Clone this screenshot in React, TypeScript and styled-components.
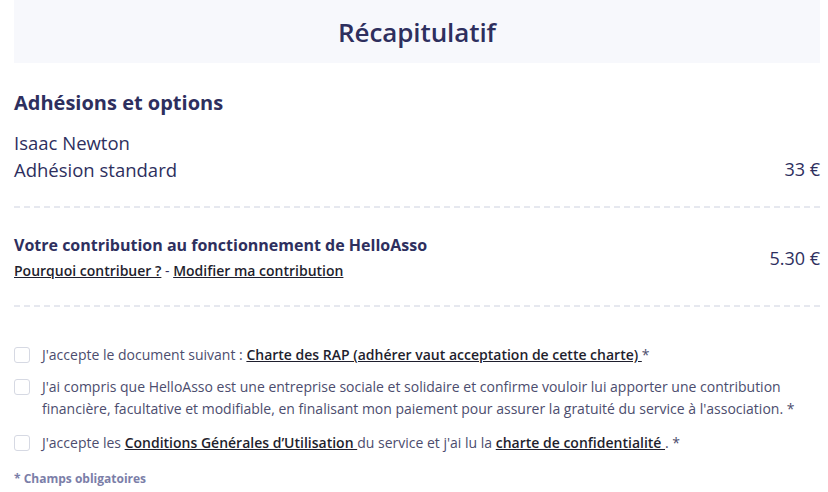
import React from "react";
import styled, { createGlobalStyle } from "styled-components";

const Global = createGlobalStyle`
  html, body { margin: 0; padding: 0; background: #fff; }
  body { font-family: "Open Sans", "Noto Sans", sans-serif; color: #2e2f5e; }
  * { box-sizing: border-box; }
`;

const Page = styled.div`
  padding: 0 8px 0 14px;
  width: 828px;
`;

const TitleBand = styled.div`
  background: #f7f8fc;
  height: 63px;
  display: flex;
  align-items: center;
  justify-content: center;
`;

const Title = styled.h1`
  margin: 0;
  font-size: 26px;
  font-weight: 600;
  color: #2e2f5e;
  letter-spacing: -0.1px;
`;

const SectionTitle = styled.h2`
  margin: 27px 0 0;
  font-size: 20px;
  font-weight: 700;
  line-height: 26px;
  color: #2e2f5e;
`;

const Row = styled.div`
  display: flex;
  justify-content: space-between;
  align-items: flex-end;
`;

const ItemBlock = styled.div`
  margin-top: 13px;
  padding-bottom: 23px;
  border-bottom: 2px dashed #e6e8ef;
`;

const ItemText = styled.div`
  font-size: 18.5px;
  line-height: 27px;
  font-weight: 500;
`;

const Price = styled.div`
  font-size: 18px;
  line-height: 27px;
  font-weight: 500;
  color: #2e2f5e;
`;

const ContribBlock = styled.div`
  padding: 25px 0 22px;
  border-bottom: 2px dashed #e6e8ef;
  display: flex;
  justify-content: space-between;
  align-items: center;
`;

const ContribTitle = styled.div`
  font-size: 16px;
  font-weight: 700;
  line-height: 24px;
`;

const LinksLine = styled.div`
  font-size: 14px;
  line-height: 24px;
  color: #2e2f5e;
  margin-top: 2px;
`;

const Link = styled.a`
  color: #1f1f2e;
  text-decoration: underline;
  font-weight: 600;
  cursor: pointer;
`;

const Checks = styled.div`
  margin-top: 37px;
  display: flex;
  flex-direction: column;
  gap: 10px;
`;

const CheckRow = styled.label<{ $extra?: number }>`
  display: flex;
  align-items: flex-start;
  gap: 12px;
  margin-top: ${(p) => p.$extra ?? 0}px;
  font-size: 14px;
  line-height: 22px;
  color: #4c4d6e;
`;

const Box = styled.span`
  flex: none;
  width: 16px;
  height: 16px;
  margin-top: 3px;
  border: 1px solid #d6d9e3;
  border-radius: 3px;
  background: #fff;
`;

const Required = styled.div`
  margin-top: 16px;
  font-size: 12px;
  font-weight: 700;
  color: #7b7ea8;
`;

export default function App() {
  return (
    <>
      <Global />
      <Page>
        <TitleBand>
          <Title>Récapitulatif</Title>
        </TitleBand>
        <SectionTitle>Adhésions et options</SectionTitle>
        <ItemBlock>
          <ItemText>Isaac Newton</ItemText>
          <Row>
            <ItemText>Adhésion standard</ItemText>
            <Price>33 €</Price>
          </Row>
        </ItemBlock>
        <ContribBlock>
          <div>
            <ContribTitle>Votre contribution au fonctionnement de HelloAsso</ContribTitle>
            <LinksLine>
              <Link>Pourquoi contribuer ?</Link> - <Link>Modifier ma contribution</Link>
            </LinksLine>
          </div>
          <Price>5.30 €</Price>
        </ContribBlock>
        <Checks>
          <CheckRow>
            <Box />
            <span>
              J'accepte le document suivant :{" "}
              <Link>Charte des RAP (adhérer vaut acceptation de cette charte) </Link> *
            </span>
          </CheckRow>
          <CheckRow>
            <Box />
            <span>
              J'ai compris que HelloAsso est une entreprise sociale et solidaire et confirme vouloir lui apporter une
              contribution financière, facultative et modifiable, en finalisant mon paiement pour assurer la gratuité du
              service à l'association. *
            </span>
          </CheckRow>
          <CheckRow $extra={2}>
            <Box />
            <span>
              J'accepte les <Link>Conditions Générales d’Utilisation </Link> du service et j'ai lu la{" "}
              <Link>charte de confidentialité </Link>. *
            </span>
          </CheckRow>
        </Checks>
        <Required>* Champs obligatoires</Required>
      </Page>
    </>
  );
}
